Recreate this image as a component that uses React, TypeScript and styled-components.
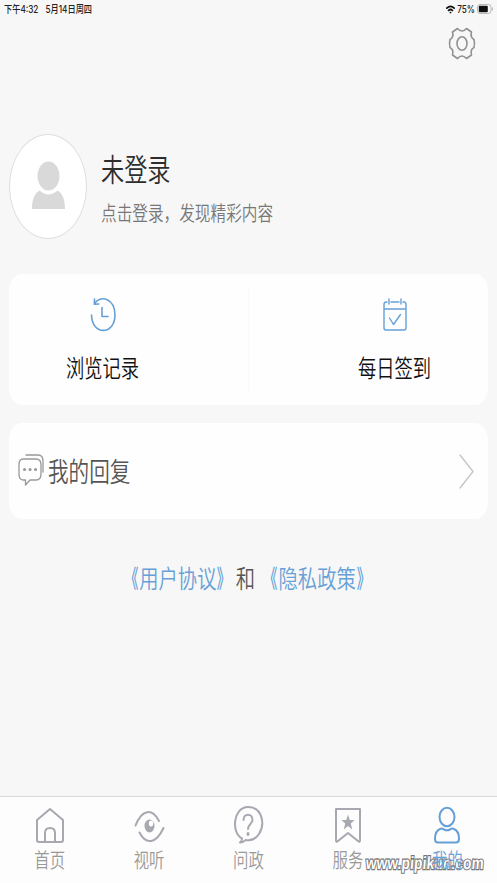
import React from 'react';
import styled, { createGlobalStyle } from 'styled-components';

const GlobalStyle = createGlobalStyle`
  * { box-sizing: border-box; }
  body { margin: 0; background: #f7f7f7; font-family: Roboto, "Noto Sans CJK SC", sans-serif; overflow: hidden; }
`;

const Screen = styled.main`
  width: 497px;
  height: 883px;
  display: flex;
  flex-direction: column;
  background: #f7f7f7;
`;

/* Tall, condensed lettering used throughout the app */
const Label = styled.span<{ $size: number; $color: string; $weight?: number }>`
  display: block;
  font-family: "Noto Sans CJK SC", sans-serif;
  font-size: ${p => p.$size}px;
  font-weight: ${p => p.$weight ?? 350};
  line-height: 1;
  color: ${p => p.$color};
  white-space: pre;
  transform: scaleY(1.3);
`;

const Bracket = styled.span<{ $side: 'left' | 'right' }>`
  display: inline-block;
  font-weight: 500;
  transform: scaleX(0.72);
  transform-origin: ${p => (p.$side === 'left' ? '85%' : '15%')} 50%;
`;

const StatusBar = styled.header`
  height: 18px;
  padding: 0 3px 0 4px;
  display: flex;
  align-items: center;
  justify-content: space-between;
`;

const StatusGroup = styled.div<{ $gap: number }>`
  display: flex;
  align-items: center;
  gap: ${p => p.$gap}px;
`;

const StatusText = styled(Label)`
  font-family: Inter, "Noto Sans CJK SC", sans-serif;
  transform: scaleY(1.25);
`;

const Tools = styled.div`
  height: 52px;
  padding: 9px 22px 0 0;
  display: flex;
  justify-content: flex-end;
`;

const Profile = styled.section`
  margin-top: 64px;
  padding-left: 9px;
  height: 105px;
  display: flex;
  gap: 14px;
`;

const Avatar = styled.div`
  width: 78px;
  height: 105px;
  border: 1.5px solid #dedede;
  border-radius: 50%;
  background: #fff;
  display: flex;
  justify-content: center;
  padding-top: 26px;
`;

const ProfileText = styled.div`
  display: flex;
  flex-direction: column;
  padding-top: 23px;
  gap: 25px;
`;

const Card = styled.section<{ $top: number; $height: number }>`
  margin: ${p => p.$top}px 9px 0;
  height: ${p => p.$height}px;
  background: #fefefe;
  border-radius: 13px / 17px;
  display: flex;
  align-items: center;
`;

const Action = styled.button`
  width: 187px;
  height: 100%;
  border: 0;
  background: none;
  display: flex;
  flex-direction: column;
  align-items: center;
  padding: 24px 0 0;
  gap: 26px;
`;

const ActionRow = styled(Card)`
  justify-content: space-between;
`;

const Divider = styled.i`
  width: 1px;
  height: 104px;
  background: #f9f9f9;
`;

const ReplyRow = styled(Card)`
  padding: 0 14px 0 9px;
  justify-content: space-between;
`;

const ReplyTitle = styled.div`
  display: flex;
  align-items: center;
  gap: 4px;
  padding-bottom: 2px;
`;

const Legal = styled.div`
  margin-top: 50px;
  padding-right: 2px;
  display: flex;
  justify-content: center;
`;

const Nav = styled.nav`
  margin-top: auto;
  height: 87px;
  border-top: 1px solid #d9d9d9;
  background: #fdfdfd;
  display: grid;
  grid-template-columns: repeat(5, 1fr);
  position: relative;
`;

const Tab = styled.a`
  display: flex;
  flex-direction: column;
  align-items: center;
  padding-top: 9px;
  gap: 6px;
`;

const Watermark = styled.span`
  position: absolute;
  left: 366px;
  top: 60px;
  font: 700 13.5px/1 "Liberation Sans", sans-serif;
  letter-spacing: 0.25px;
  color: #fff;
  -webkit-text-stroke: 1.8px #777;
  paint-order: stroke fill;
  transform: scaleY(1.3) skewX(-6deg);
  white-space: nowrap;
`;

const Icon = styled.svg<{ $color: string; $stroke?: number }>`
  display: block;
  flex: none;
  fill: none;
  overflow: visible;
  stroke: ${p => p.$color};
  stroke-width: ${p => p.$stroke ?? 2};
  stroke-linecap: round;
  stroke-linejoin: round;
`;

const BLUE = '#66a0d6';
const GREY = '#a7a8b0';

const tabs = [
  { name: '首页', color: GREY, art: <><path d="M2 14 15 3l13 11v20q0 2-2 2H4q-2 0-2-2Z" /><path d="M10 36V27q0-5 5-5t5 5v9" /></> },
  { name: '视听', color: GREY, art: <><path d="M1.500 19.500C8 3 18 2 25 15M5.500 26.500C12 39 22 38 29.500 22" /><ellipse cx="15.500" cy="20" rx="5" ry="6.500" fill={GREY} stroke="none" /><ellipse cx="17" cy="17.500" rx="2.200" ry="3" fill="#fff" stroke="none" /></> },
  { name: '问政', color: GREY, art: <><path d="M7 36.500q2-1 2-4C-2 27 0 1 15 1S32 19 26 28C22 34 17 35 12.500 34q-2 2.500-5.500 2.500Z" /><path d="M10.500 14c0-7 9-7 9 0 0 4-4.500 4-4.500 9" /><ellipse cx="15" cy="28" rx="1.500" ry="2" fill={GREY} stroke="none" /></> },
  { name: '服务', color: GREY, art: <><path d="M3 3h24v31q0 3-2 1l-10-8L5 35q-2 2-2-1Z" /><path d="m15 8.500 1.700 5.500H21.500l-3.700 3.500 1.400 6L15 20l-4.200 3.500 1.400-6L8.500 14h4.800Z" fill={GREY} stroke="none" /></> },
  { name: '我的', color: BLUE, art: <><ellipse cx="15" cy="11" rx="7.500" ry="9.200" /><path d="M8 23Q3 25 3 33q0 3.500 3 3.500h18q3 0 3-3.500 0-8-5-10-2-1-4 .500-3 1.500-6 0-2-1.500-4-.500Z" /></> },
];

export default function App() {
  return (
    <Screen>
      <GlobalStyle />
      <StatusBar>
        <StatusGroup $gap={7}>
          <StatusText $size={8.2} $color="#222" $weight={500}>下午4:32</StatusText>
          <StatusText $size={8.2} $color="#222" $weight={500}>5月14日周四</StatusText>
        </StatusGroup>
        <StatusGroup $gap={2}>
          <Icon $color="#111" $stroke={1.7} width="9" height="9" viewBox="0 0 9 9"><path d="M.8 3.200Q4.500-.5 8.200 3.200M2.500 5.500q2-2 4 0M4.400 7.500h.2" /></Icon>
          <StatusText $size={8.2} $color="#222" $weight={500}>75%</StatusText>
          <Icon $color="#aaa" $stroke={0.8} width="17" height="10" viewBox="0 0 17 10"><rect x=".5" y=".5" width="13.500" height="9" rx="2.500" /><rect x="1.800" y="1.800" width="9" height="6.400" rx="1" fill="#111" stroke="none" /><path d="M15.500 4v2" /></Icon>
        </StatusGroup>
      </StatusBar>
      <Tools>
        <Icon $color="#919191" $stroke={1.6} width="26" height="33" viewBox="0 0 26 33">
          <path d="M8.500 1.500Q13 6.500 17.500 1.500L22.500 5q-1.500 5.500 2.500 7.500 1 4 0 8-4 2-2.500 7.500l-5 3.500q-4.500-5-9 0l-5-3.500Q5 22.500 1 20.500q-1-4 0-8Q5 10.500 3.500 5Z" />
          <ellipse cx="13" cy="16.500" rx="5" ry="6.700" />
        </Icon>
      </Tools>
      <Profile>
        <Avatar>
          <Icon $color="none" width="34" height="50" viewBox="0 0 34 50">
            <ellipse cx="17.500" cy="15" rx="11" ry="14.500" fill="#d9d9d9" />
            <path d="M8.500 29.500q9 8 18 0c5 3 7.500 9 7.500 18.500H1c0-9.500 2.500-15.500 7.500-18.500Z" fill="#d9d9d9" />
          </Icon>
        </Avatar>
        <ProfileText>
          <Label $size={23.2} $color="#2d2d2d">未登录</Label>
          <Label $size={15.65} $color="#777">点击登录，发现精彩内容</Label>
        </ProfileText>
      </Profile>
      <ActionRow $top={35} $height={131}>
        <Action>
          <Icon $color={BLUE} $stroke={1.6} width="26" height="34" viewBox="0 0 26 34">
            <path d="M1.500 17C2 38 25 37 25 17 25 1 11-3.500 5 5M4.500 1l-.2 5.300 4.500-.3M12 9.500v9h6" />
          </Icon>
          <Label $size={18.3} $color="#111">浏览记录</Label>
        </Action>
        <Divider />
        <Action>
          <Icon $color={BLUE} $stroke={1.4} width="24" height="34" viewBox="0 0 24 34">
            <path d="M4 4H3Q1 4 1 7v23q0 2 2 2h18q2 0 2-2V7q0-3-2-3h-1M8 4h8M6 1v5M18 1v5M1 11h22M6.500 20l4 6.500 7-10" />
          </Icon>
          <Label $size={18.3} $color="#111">每日签到</Label>
        </Action>
      </ActionRow>
      <ReplyRow $top={18} $height={96}>
        <ReplyTitle>
          <Icon $color="#999" $stroke={1.3} width="26" height="32" viewBox="0 0 26 32">
            <path d="M5 5h13q5 0 5 6v9q0 6-5 6h-6l-4.500 5v-5H5q-4 0-4-6v-9q0-6 4-6ZM8 1h12q5 0 5 6v11" />
            <path d="M6.500 15.500h.1M12 15.500h.1M17.500 15.500h.1" strokeWidth="3" />
          </Icon>
          <Label $size={20.6} $color="#555">我的回复</Label>
        </ReplyTitle>
        <Icon $color="#c5c5c5" $stroke={1.3} width="15" height="35" viewBox="0 0 15 35"><path d="m1 1 13 16.500L1 34" /></Icon>
      </ReplyRow>
      <Legal>
        <Label $size={19.3} $color={BLUE}><Bracket $side="left">《</Bracket>用户协议<Bracket $side="right">》</Bracket></Label>
        <Label $size={19.3} $color="#555">和 </Label>
        <Label $size={19.3} $color={BLUE}><Bracket $side="left">《</Bracket>隐私政策<Bracket $side="right">》</Bracket></Label>
      </Legal>
      <Nav>
        <Watermark>www.pipikun.com</Watermark>
        {tabs.map(t => (
          <Tab key={t.name}>
            <Icon $color={t.color} width="30" height="40" viewBox="0 0 30 40">{t.art}</Icon>
            <Label $size={15.4} $color={t.color === BLUE ? BLUE : '#999'}>{t.name}</Label>
          </Tab>
        ))}
      </Nav>
    </Screen>
  );
}
